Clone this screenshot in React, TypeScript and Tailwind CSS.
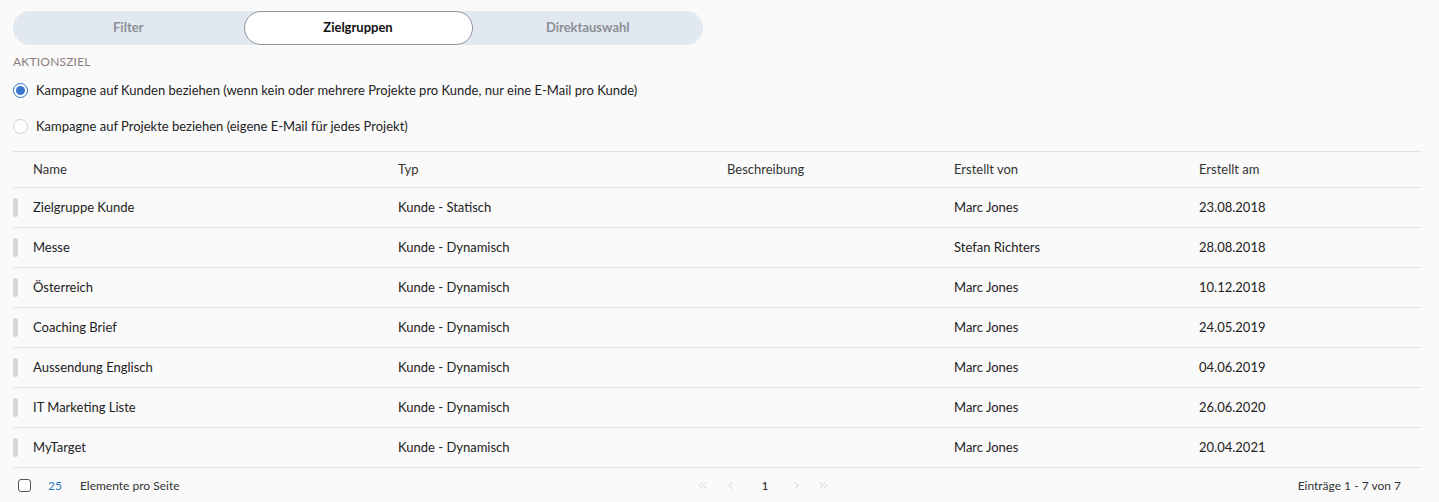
import { ChevronLeft, ChevronRight, ChevronsLeft, ChevronsRight } from "lucide-react";

const rows = [
  { name: "Zielgruppe Kunde", typ: "Kunde - Statisch", von: "Marc Jones", am: "23.08.2018" },
  { name: "Messe", typ: "Kunde - Dynamisch", von: "Stefan Richters", am: "28.08.2018" },
  { name: "Österreich", typ: "Kunde - Dynamisch", von: "Marc Jones", am: "10.12.2018" },
  { name: "Coaching Brief", typ: "Kunde - Dynamisch", von: "Marc Jones", am: "24.05.2019" },
  { name: "Aussendung Englisch", typ: "Kunde - Dynamisch", von: "Marc Jones", am: "04.06.2019" },
  { name: "IT Marketing Liste", typ: "Kunde - Dynamisch", von: "Marc Jones", am: "26.06.2020" },
  { name: "MyTarget", typ: "Kunde - Dynamisch", von: "Marc Jones", am: "20.04.2021" },
];

const cols = "grid grid-cols-[365px_329px_227px_245px_1fr]";

export default function App() {
  return (
    <div className="min-h-[502px] bg-[#fafafa] px-[13px] pt-[11px] font-['Lato',sans-serif] text-[#222]">
      <div className="flex h-[34px] w-[690px] items-center rounded-full bg-[#e2e8ef] text-[13px] font-bold">
        <div className="flex-1 text-center text-[#8a9096]">Filter</div>
        <div className="flex h-[34px] w-[229px] items-center justify-center rounded-full border border-[#8f959b] bg-white text-[#111]">
          Zielgruppen
        </div>
        <div className="flex-1 text-center text-[#8a9096]">Direktauswahl</div>
      </div>

      <div className="mt-[8px] text-[12px] uppercase tracking-[0.2px] text-[#8b7d7d]">Aktionsziel</div>

      <div className="mt-[10px] flex items-center gap-[8px] text-[13px]">
        <span className="flex h-[15px] w-[15px] items-center justify-center rounded-full border border-[#2f6fc4] bg-white">
          <span className="h-[9px] w-[9px] rounded-full bg-[#3a78cf]" />
        </span>
        <span>Kampagne auf Kunden beziehen (wenn kein oder mehrere Projekte pro Kunde, nur eine E-Mail pro Kunde)</span>
      </div>
      <div className="mt-[16px] flex items-center gap-[8px] text-[13px]">
        <span className="h-[15px] w-[15px] rounded-full border border-[#d0d0d0] bg-white" />
        <span>Kampagne auf Projekte beziehen (eigene E-Mail für jedes Projekt)</span>
      </div>

      <div className="mt-[15px] w-[1409px] border-t border-[#e2e2e2] text-[13px]">
        <div className={`${cols} h-[36px] items-center border-b border-[#e2e2e2] pl-[20px] text-[#333]`}>
          <div>Name</div>
          <div>Typ</div>
          <div>Beschreibung</div>
          <div>Erstellt von</div>
          <div>Erstellt am</div>
        </div>
        {rows.map((r, i) => (
          <div key={i} className="relative h-[40px] border-b border-[#e2e2e2]">
            <span className="absolute left-0 top-[10px] h-[19px] w-[5px] rounded-full bg-[#d6d6d6]" />
            <div className={`${cols} h-full items-center pl-[20px]`}>
              <div>{r.name}</div>
              <div>{r.typ}</div>
              <div></div>
              <div>{r.von}</div>
              <div>{r.am}</div>
            </div>
          </div>
        ))}
        <div className="flex h-[35px] items-center text-[12px]">
          <span className="ml-[5px] h-[13px] w-[13px] rounded-[3px] border border-[#555] bg-white" />
          <span className="ml-[17px] text-[#2a78c0]">25</span>
          <span className="ml-[18px] text-[#333]">Elemente pro Seite</span>
          <div className="ml-[516px] flex items-center text-[#bbb]">
            <ChevronsLeft size={13} strokeWidth={1.2} />
            <ChevronLeft size={13} strokeWidth={1.2} className="ml-[15px]" />
            <span className="ml-[25px] text-[#222]">1</span>
            <ChevronRight size={13} strokeWidth={1.2} className="ml-[22px]" />
            <ChevronsRight size={13} strokeWidth={1.2} className="ml-[14px]" />
          </div>
          <span className="ml-auto mr-[21px] text-[#333]">Einträge 1 - 7 von 7</span>
        </div>
      </div>
    </div>
  );
}
